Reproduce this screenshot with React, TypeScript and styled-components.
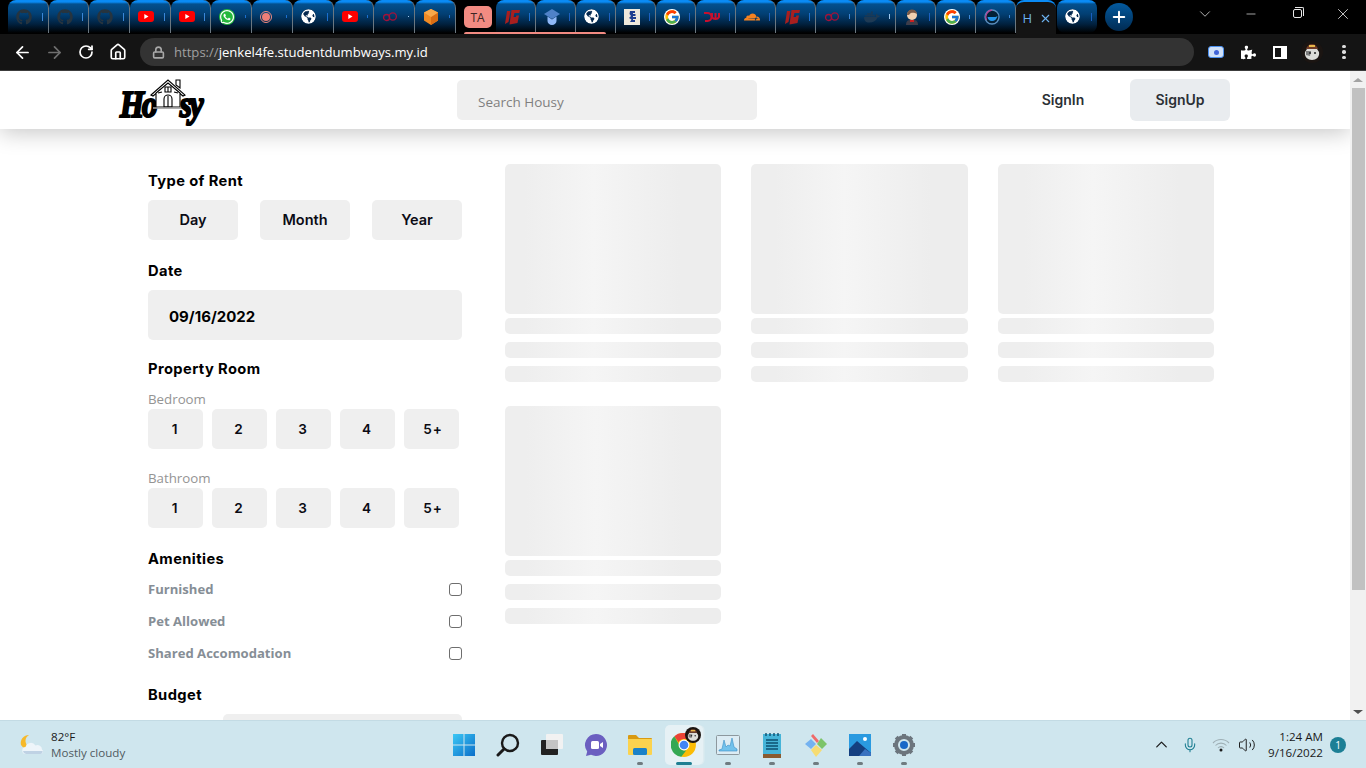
import React from "react";
import styled, { createGlobalStyle } from "styled-components";
import { ArrowLeft, ArrowRight, RotateCw, Home, Lock, ChevronDown, Minus, X, Plus, ChevronUp, Mic, Volume2 } from "lucide-react";
import { FaGithub, FaWhatsapp, FaGlobeAmericas, FaPuzzlePiece, FaDocker } from "react-icons/fa";
import { FcGoogle } from "react-icons/fc";
import { SiCloudflare } from "react-icons/si";

const Global = createGlobalStyle`
  html, body { margin: 0; padding: 0; height: 100%; overflow: hidden; background: #fff; }
  * { box-sizing: border-box; }
`;

const Poppins = `"Inter", "Liberation Sans", sans-serif`;
const Segoe = `"Open Sans", "Liberation Sans", sans-serif`;

const Screen = styled.div`
  width: 1366px; height: 768px; display: flex; flex-direction: column; overflow: hidden;
`;

/* ---------- browser chrome ---------- */
const TabStrip = styled.div`
  height: 34px; background: #000; display: flex; align-items: flex-start; padding-left: 8px; position: relative; flex: none;
`;
const Tab = styled.div<{ $last?: boolean; $w?: number }>`
  width: ${(p) => p.$w ?? 40}px; height: 33px; flex: none; display: flex; align-items: center; padding: 0 0 0 8px; gap: 7px; position: relative;
  background: linear-gradient(180deg, #0a8bf5 0, #0a8bf5 2px, #03508f 4px, #023f73 14px, #01213f 24px, #000 33px);
  border-radius: 8px 8px ${(p) => (p.$last ? "8px 8px" : "0 0")};
  border-right: ${(p) => (p.$last ? "none" : "1px solid #6b7780")};
`;
const ActiveTab = styled.div`
  width: 40px; height: 34px; flex: none; background: #141414; border-radius: 8px 8px 0 0; display: flex; align-items: center;
  padding-left: 7px; gap: 7px; margin-right: 1px; color: #6cb2f0; font: 13px ${Segoe}; border-top: 2px solid #0a8bf5;
`;
const Sliver = styled.span<{ $c?: string; $h?: number }>`
  width: 1px; height: ${(p) => p.$h ?? 8}px; background: ${(p) => p.$c ?? "#1a6fd0"}; flex: none; margin-left: auto; margin-right: 5px;
`;
const GroupChip = styled.div`
  width: 28px; height: 22px; margin: 6px 4px 0 8px; background: #f28b82; border-radius: 5px; color: #3c2624; flex: none;
  display: flex; align-items: center; justify-content: center; font: 12px ${Segoe};
`;
const GroupLine = styled.div`
  position: absolute; left: 464px; top: 32px; width: 142px; height: 2px; background: #f28b82; border-radius: 2px 2px 0 0;
`;
const NewTab = styled.div`
  width: 28px; height: 28px; border-radius: 50%; margin: 3px 0 0 8px; flex: none; color: #fff;
  background: linear-gradient(180deg, #035a9f, #012b52); display: flex; align-items: center; justify-content: center;
`;
const WindowControls = styled.div`
  margin-left: auto; display: flex; color: #e8e8e8; height: 28px;
`;
const WinBtn = styled.div`
  width: 46px; display: flex; align-items: center; justify-content: center; padding-bottom: 1px;
`;
const Restore = styled.span`
  width: 9px; height: 9px; border: 1px solid #e8e8e8; border-radius: 2px; position: relative; display: block;
  &::after { content: ""; position: absolute; left: 1px; top: -3px; width: 8px; height: 8px; border: 1px solid #e8e8e8; border-left: 0; border-bottom: 0; border-radius: 0 2px 0 0; }
`;
const Toolbar = styled.div`
  height: 37px; background: #141414; border-bottom: 1px solid #3c3c3c; display: flex; align-items: center; padding: 0 10px 0 6px; flex: none; color: #fff;
`;
const ToolBtn = styled.div<{ $dim?: boolean }>`
  width: 32px; height: 32px; display: flex; align-items: center; justify-content: center; flex: none;
  color: ${(p) => (p.$dim ? "#6f6f6f" : "#fff")};
`;
const Omnibox = styled.div`
  width: 1054px; height: 28px; margin: 0 6px 0 6px; border-radius: 14px; background: #333; display: flex; align-items: center; padding-left: 12px; gap: 9px; flex: none;
  color: #a8a8a8;
`;
const Url = styled.span`
  font: 13.1px ${Segoe}; color: #a0a0a0;
  & b { font-weight: 400; color: #fff; }
`;
const CastIcon = styled.div`
  width: 16px; height: 12px; background: #cfe0f8; border: 1.5px solid #4a90f0; border-radius: 3px; display: flex; align-items: center; justify-content: center;
  &::after { content: ""; width: 5px; height: 5px; border-radius: 50%; background: #3f63d8; }
`;
const PanelIcon = styled.div`
  width: 14px; height: 13px; border: 2px solid #fff; border-right-width: 6px; background: #141414;
`;
const Dots = styled.div`
  display: flex; flex-direction: column; gap: 2px;
  & span { width: 3.5px; height: 3.5px; border-radius: 50%; background: #ddd; display: block; }
`;

/* ---------- page ---------- */
const Viewport = styled.div`
  flex: 1; display: flex; min-height: 0; background: #fff;
`;
const Page = styled.div`
  width: 1350px; overflow: hidden; display: flex; flex-direction: column;
`;
const Nav = styled.header`
  height: 58px; flex: none; background: #fff; box-shadow: 0 4px 22px rgba(0, 0, 0, 0.22); position: relative; z-index: 1;
  padding: 0 120px; display: flex; align-items: center;
`;
const LogoBox = styled.div`
  width: 337px; display: flex; align-items: center; flex: none;
`;
const LogoText = styled.span`
  display: inline-block; font: italic 700 31px/1 "Liberation Serif", serif; color: #000; -webkit-text-stroke: 1.8px #000; letter-spacing: -2px;
  transform: scaleY(1.22); padding-top: 6px;
`;
const LogoHouse = styled.svg`
  margin: -12px -6px 0 -6px; position: relative; flex: none;
`;
const SearchInput = styled.input`
  width: 300px; height: 40px; border: 0; background: #efefef; border-radius: 5px; padding: 3px 21px 0; font: 500 13.5px ${Segoe}; color: #333; outline: 0;
  &::placeholder { color: #7f7f7f; opacity: 1; }
`;
const Auth = styled.div`
  margin-left: auto; display: flex; gap: 17px; align-items: center;
`;
const AuthBtn = styled.button<{ $filled?: boolean }>`
  width: 100px; height: 42px; border: 0; border-radius: 6px; background: ${(p) => (p.$filled ? "#e9ecef" : "transparent")};
  font: 600 14px ${Poppins}; color: #2b3035; padding: 0 0 2px;
`;
const Main = styled.main`
  display: flex; padding: 35px 136px 0 148px; gap: 43px; align-items: flex-start;
`;
const Sidebar = styled.aside`
  width: 314px; flex: none; margin-top: 7px; display: flex; flex-direction: column;
`;
const Section = styled.section<{ $mt?: number }>`
  margin-top: ${(p) => p.$mt ?? 0}px;
`;
const Heading = styled.h3<{ $mb?: number }>`
  margin: 0 0 ${(p) => p.$mb ?? 9}px; font: 700 14.7px/20px ${Poppins}; color: #000; letter-spacing: 0.4px;
`;
const RentRow = styled.div`
  display: flex; justify-content: space-between;
`;
const RentBtn = styled.button`
  width: 90px; height: 40px; border: 0; border-radius: 5px; background: #efefef; font: 600 14.5px ${Poppins}; color: #0b0b14; padding: 0 0 2px;
`;
const DateInput = styled.input`
  width: 100%; height: 50px; border: 0; border-radius: 5px; background: #efefef; padding: 2px 21px 0; font: 700 15px ${Poppins}; color: #000; outline: 0; display: block;
`;
const SubLabel = styled.div`
  font: 500 13.3px/20px ${Segoe}; color: #949494;
`;
const CountRow = styled.div`
  display: flex; gap: 9px;
`;
const CountBtn = styled.button<{ $wide?: boolean }>`
  width: 55px; height: 40px; border: 0; border-radius: 5px; background: #efefef; font: 600 13.6px ${Poppins}; color: #0b0b14;
  padding: ${(p) => (p.$wide ? "0 0 0 3px" : "0 2px 0 0")};
  letter-spacing: ${(p) => (p.$wide ? "1px" : "0")};
`;
const Amenity = styled.label`
  display: flex; justify-content: space-between; align-items: center; height: 20px; margin-bottom: 12px;
  font: 700 13.1px/20px ${Segoe}; color: #868e96;
`;
const Check = styled.input`
  width: 13px; height: 13px; margin: 0; appearance: none; border: 1px solid #6e6e6e; border-radius: 3px; background: #fff; flex: none;
`;
const BudgetRow = styled.div`
  display: flex; justify-content: flex-end;
`;
const BudgetInput = styled.input`
  width: 239px; height: 40px; border: 0; border-radius: 5px; background: #efefef; outline: 0;
`;
const Results = styled.div`
  width: 709px; flex: none; display: grid; grid-template-columns: repeat(3, 1fr); column-gap: 30px; row-gap: 24px;
`;
const Card = styled.div`
  display: flex; flex-direction: column; gap: 8px;
`;
const Skeleton = styled.div<{ $h: number; $shine: number; $mb?: number }>`
  height: ${(p) => p.$h}px; margin-bottom: ${(p) => p.$mb ?? 0}px; border-radius: 5px;
  background: linear-gradient(90deg, #eee 0%, #eee ${(p) => p.$shine - 32}%, #f5f5f5 ${(p) => p.$shine}%, #ededed ${(p) => p.$shine + 40}%, #ededed 100%);
`;

/* ---------- scrollbar ---------- */
const Scrollbar = styled.div`
  width: 16px; background: #f1f1f1; display: flex; flex-direction: column; align-items: center; flex: none;
`;
const ScrollUp = styled.div`
  width: 0; height: 0; margin-top: 7px; border: 5px solid transparent; border-top: 0; border-bottom: 4px solid #a3a3a3;
`;
const ScrollThumb = styled.div`
  width: 13px; height: 502px; margin-top: 6px; background: #c1c1c1; flex: none;
`;
const ScrollDown = styled.div`
  width: 0; height: 0; margin-top: auto; margin-bottom: 6px; border: 5px solid transparent; border-bottom: 0; border-top: 4px solid #505050;
`;

/* ---------- taskbar ---------- */
const Taskbar = styled.footer`
  height: 48px; flex: none; background: #cfe6ee; border-top: 1px solid #c3dbe4; display: grid; grid-template-columns: 1fr auto 1fr; align-items: center;
`;
const Weather = styled.div`
  display: flex; align-items: center; padding-left: 19px; gap: 8px;
`;
const WeatherText = styled.div`
  font: 11.6px/16px ${Segoe}; color: #1a1a1a;
  & small { display: block; font-size: 11.6px; color: #4f5a60; }
`;
const TaskIcons = styled.div`
  display: flex; margin-left: 1px;
`;
const TaskIcon = styled.div<{ $active?: boolean }>`
  width: 44px; height: 44px; display: flex; align-items: center; justify-content: center; position: relative; flex: none;
  &::before {
    content: ""; position: absolute; left: 3px; top: 2px; width: 38px; height: 40px; border-radius: 5px;
    background: ${(p) => (p.$active ? "#e6f1f5" : "transparent")};
    box-shadow: ${(p) => (p.$active ? "2px 0 0 -0.5px #dcebf0" : "none")};
  }
  & > svg { position: relative; }
  &::after {
    content: ""; position: absolute; bottom: 2px; left: 50%; transform: translateX(-50%);
    width: ${(p) => (p.$active ? "16px" : "6px")}; height: 3px; border-radius: 2px; background: ${(p) => (p.$active ? "#1d7f92" : "#6f7b80")};
  }
`;
const NoDot = styled(TaskIcon)`
  &::after { display: none; }
`;
const Tray = styled.div`
  display: flex; align-items: center; justify-content: flex-end; padding-right: 20px; color: #1b1b1b;
`;
const TrayBtn = styled.div<{ $w: number; $c?: string }>`
  width: ${(p) => p.$w}px; display: flex; justify-content: center; color: ${(p) => p.$c ?? "#1b1b1b"};
`;
const Clock = styled.div`
  font: 11.6px/16px ${Segoe}; text-align: right; color: #1a1a1a; margin: 0 7px 0 6px; width: 60px;
`;
const Badge = styled.div`
  width: 16px; height: 16px; border-radius: 50%; background: #1c7f95; color: #fff; font: 10px/16px ${Segoe}; text-align: center;
`;
const AvatarBadge = styled.span`
  position: absolute; right: 5px; top: 4px; z-index: 1; display: block; line-height: 0;
`;

/* ---------- drawings ---------- */
const Yt = () => (
  <svg width="16" height="11" viewBox="0 0 16 11"><rect width="16" height="11" rx="3" fill="#f00" /><path d="M6.3 3l4.2 2.5L6.3 8z" fill="#fff" /></svg>
);
const Inf = () => (
  <svg width="16" height="16" viewBox="0 0 16 16" fill="none" stroke="#a3123a" strokeWidth="1.3"><circle cx="4.6" cy="8.5" r="3" /><circle cx="10.8" cy="7.5" r="3.6" /></svg>
);
const Box3d = () => (
  <svg width="16" height="16" viewBox="0 0 16 16"><path d="M8 0l7 3.6v8L8 16l-7-4.400v-8z" fill="#f08a24" /><path d="M8 8l7-4.400v8L8 16z" fill="#d96d14" /><path d="M8 0l7 3.600L8 8 1 3.600z" fill="#f9a84a" /></svg>
);
const Rec = () => (
  <svg width="12" height="12" viewBox="0 0 12 12"><circle cx="6" cy="6" r="5.500" fill="none" stroke="#f28b82" /><circle cx="6" cy="6" r="4" fill="#ee7f78" /></svg>
);
const IG = () => (
  <svg width="16" height="16" viewBox="0 0 16 16"><path d="M3 2h3.500L4.500 13 1 15z" fill="#a81f1f" /><path d="M7.500 1H16l-.7 3H10.500L9.500 8H12l.3-1.500H15L13.500 14l-8 1.500z" fill="#a81f1f" /></svg>
);
const Cap = () => (
  <svg width="16" height="16" viewBox="0 0 16 16"><path d="M8 0l8 5-8 5-8-5z" fill="#4f82c8" /><path d="M3.500 7.500L8 10.400l4.500-2.900V12a4.500 4 0 0 1-9 0z" fill="#8fb8f8" /></svg>
);
const Doc = () => (
  <svg width="16" height="16" viewBox="0 0 16 16"><rect width="16" height="16" fill="#eee9dc" /><path d="M6 2h5v2H9v1h2.500v2H9v1h3v2H9v1h2v2H6l1.500-2.500L5 9l2-2-1.500-2z" fill="#1f3f8f" /></svg>
);
const Dw = () => (
  <svg width="16" height="10" viewBox="0 0 16 10" fill="none" stroke="#c8102e" strokeWidth="2"><path d="M0 1h3.500a4 4 0 0 1 0 8H1" /><path d="M8 1v4a4 4 0 0 0 7 0V1M11.500 1v6" /></svg>
);
const Jenkins = ({ size }: { size: number }) => (
  <svg width={size} height={size} viewBox="0 0 16 16"><path d="M2 16c0-4 2-5 4-5h4c2 0 4 1 4 5z" fill="#3d3d4a" /><circle cx="8" cy="6" r="5" fill="#f0d0b0" /><path d="M3 6a5 5 0 0 1 10-1c-2-1-6-2-7 0-1 1-2 1-3 1z" fill="#7a5a48" /><rect x="6" y="11" width="4" height="2" fill="#c22" /></svg>
);
const DockerRing = () => (
  <svg width="16" height="16" viewBox="0 0 16 16"><circle cx="8" cy="8" r="7" fill="#032036" stroke="#5b8fc0" strokeWidth="1.300" /><path d="M2.500 11A7 7 0 0 1 8 1" fill="none" stroke="#b0489a" strokeWidth="1.300" /><path d="M3.500 8h8c1 0 1.500-1 2-1-.5 3-3 5-5.500 5s-4-1.500-4.500-4z" fill="#2496ed" /></svg>
);
const Fav = ({ k }: { k: string }) => {
  switch (k) {
    case "gh": return <FaGithub size={16} color="#26343f" />;
    case "yt": return <Yt />;
    case "wa": return <FaWhatsapp size={16} color="#fff" style={{ background: "#25b83c", borderRadius: "50%" }} />;
    case "rec": return <Rec />;
    case "globe": return <FaGlobeAmericas size={15} color="#fff" style={{ background: "#04284f", borderRadius: "50%" }} />;
    case "inf": return <Inf />;
    case "box": return <Box3d />;
    case "ig": return <IG />;
    case "cap": return <Cap />;
    case "doc": return <Doc />;
    case "g": return <FcGoogle size={16} style={{ background: "#fff", borderRadius: "50%" }} />;
    case "dw": return <Dw />;
    case "cf": return <SiCloudflare size={16} color="#f58220" />;
    case "dk": return <FaDocker size={16} color="#1e3a54" />;
    case "jk": return <Jenkins size={16} />;
    case "dr": return <DockerRing />;
    default: return null;
  }
};
const Avatar = ({ size }: { size: number }) => (
  <svg width={size} height={size} viewBox="0 0 22 22"><circle cx="11" cy="11" r="11" fill="#1b1512" /><path d="M4 11l2-3h10l2 3c1 5-3 8-7 8s-8-3-7-8z" fill="#dcdcd8" /><path d="M5 8c1-3 3-5 6-5s5 2 6 5z" fill="#6e3a26" /><rect x="8" y="4" width="6" height="2" fill="#e8b84a" /><path d="M5 10l5 0-1 5-4-1z" fill="#7c7c7c" /><circle cx="14" cy="12" r="1" fill="#222" /><circle cx="9" cy="12" r="1" fill="#222" /></svg>
);
const Cloud = () => (
  <svg width="24" height="22" viewBox="0 0 24 22"><path d="M10 1a8 8 0 0 0-8 10 8 8 0 0 0 11 3 7 7 0 0 1-3-13z" fill="#f6b92b" /><path d="M7 20a3.500 3.500 0 0 1-.5-7 5.500 5.500 0 0 1 10-1.500A4.500 4.500 0 0 1 23 15.500 2.500 2.500 0 0 1 21.500 20z" fill="#eef5fa" /><path d="M4 17h19.500a2.500 2.500 0 0 1-2 3H7a3.500 3.500 0 0 1-3-3z" fill="#bfd2e4" /></svg>
);
const Win = () => (
  <svg width="24" height="24" viewBox="0 0 24 24"><defs><linearGradient id="w1" x1="0" y1="0" x2="1" y2="1"><stop offset="0" stopColor="#3cc8f5" /><stop offset="1" stopColor="#0b6ec9" /></linearGradient></defs><path d="M1 1h10.500v10.500H1zM12.500 1H23v10.500H12.500zM1 12.500h10.500V23H1zM12.500 12.500H23V23H12.500z" fill="url(#w1)" /></svg>
);
const SearchGlass = () => (
  <svg width="24" height="24" viewBox="0 0 24 24" fill="none" stroke="#1a1a1a"><circle cx="14" cy="10" r="8" strokeWidth="2.400" /><path d="M8 16l-6 6" strokeWidth="3" strokeLinecap="round" /></svg>
);
const TaskView = () => (
  <svg width="24" height="24" viewBox="0 0 24 24"><rect x="6" y="1" width="17" height="15" rx="1" fill="#f2f2f2" /><rect x="1" y="7" width="17" height="15" rx="1" fill="#222" /><rect x="6" y="7" width="12" height="9" fill="#c4c4c4" /></svg>
);
const Meet = () => (
  <svg width="24" height="24" viewBox="0 0 24 24"><path d="M12 1a11 11 0 1 1-5 20.800L2 23l1.200-4.500A11 11 0 0 1 12 1z" fill="#6b5fc0" /><rect x="7" y="8" width="8" height="8" rx="1.500" fill="#fff" /><path d="M16 11l3-2v6l-3-2z" fill="#fff" /></svg>
);
const Folder = () => (
  <svg width="26" height="24" viewBox="0 0 26 24"><path d="M1 3a1 1 0 0 1 1-1h7l3 3h12a1 1 0 0 1 1 1v5H1z" fill="#d99a12" /><path d="M1 6h24v15a1 1 0 0 1-1 1H2a1 1 0 0 1-1-1z" fill="#fbd34e" /><rect x="6" y="15" width="14" height="7" rx="1.500" fill="#1a82c8" /></svg>
);
const Chrome = () => (
  <svg width="26" height="26" viewBox="0 0 48 48"><circle cx="24" cy="24" r="22" fill="#fbbc05" /><path d="M24 2a22 22 0 0 1 19 11H24a11 11 0 0 0-10 6L6 8A22 22 0 0 1 24 2z" fill="#ea4335" /><path d="M6 8l9.500 16.500A10 10 0 0 0 28 34L19 45.500A22 22 0 0 1 6 8z" fill="#34a853" /><circle cx="24" cy="24" r="10" fill="#fff" /><circle cx="24" cy="24" r="8" fill="#4285f4" /></svg>
);
const Monitor = () => (
  <svg width="24" height="20" viewBox="0 0 24 20"><rect x="0.500" y="0.500" width="23" height="19" rx="1" fill="#dcecf4" stroke="#8d989e" /><path d="M3 15l3-1 2-9 2 7 2-2 2 1 2-8 2 9 3 2v2H3z" fill="#72c2ec" stroke="#3a8fc6" strokeWidth=".6" /></svg>
);
const Notes = () => (
  <svg width="20" height="26" viewBox="0 0 20 26"><rect x="1" y="2" width="18" height="22" fill="#46b4d8" /><path d="M1 22h18v4H1z" fill="#8a5a2f" /><path d="M4 8h12M4 11h12M4 14h12M4 17h12" stroke="#0d4f70" strokeWidth="1.400" /><path d="M4 1v3M8 1v3M12 1v3M16 1v3" stroke="#0d4f70" strokeWidth="1.400" /></svg>
);
const Kite = () => (
  <svg width="24" height="24" viewBox="0 0 24 24"><path d="M7 6l5 5-5 5-6-5z" fill="#74b2f0" /><path d="M17 5l6 6-5 5-5-5z" fill="#7cc46a" /><path d="M12 12l6 5-6 7-5-7z" fill="#f6dc72" /><path d="M9 1l6 7-2 2-6-7z" fill="#ef6a6a" /></svg>
);
const Photo = () => (
  <svg width="22" height="22" viewBox="0 0 22 22"><rect width="22" height="22" fill="#2a9ae0" /><path d="M0 22v-7l8-8 14 12v3z" fill="#143f80" /><path d="M10 22l6-7 6 4v3z" fill="#3a72c0" /><circle cx="16" cy="5" r="2" fill="#fff" /></svg>
);
const Gear = () => (
  <svg width="24" height="24" viewBox="0 0 24 24"><circle cx="12" cy="12" r="8" fill="none" stroke="#6c757d" strokeWidth="4" /><path d="M12 1v4M12 19v4M1 12h4M19 12h4M4.200 4.200L7 7M17 17l2.800 2.800M4.200 19.800L7 17M17 7l2.800-2.800" stroke="#6c757d" strokeWidth="4" /><circle cx="12" cy="12" r="4" fill="#1868c8" /></svg>
);
const WifiFaded = () => (
  <svg width="18" height="14" viewBox="0 0 18 14" fill="none" stroke="#9fb0b6" strokeWidth="1.100"><path d="M1 5a11 11 0 0 1 16 0M3.500 7.500a7.500 7.500 0 0 1 11 0M6 10a4 4 0 0 1 6 0" /><circle cx="9" cy="12" r="1.500" fill="#1b1b1b" stroke="none" /></svg>
);

const group1: [string, string?, number?][] = [
  ["gh", "#3a87d8"], ["gh", "#3a87d8"], ["gh", "#3a87d8"], ["yt", "#3a87d8"], ["yt", "#3a87d8"],
  ["wa", "#1a6fd0", 3], ["rec", "#1a6fd0", 3], ["globe", "#1a6fd0"], ["yt", "#1a6fd0", 3], ["inf", "#9ec8ee", 1], ["box", "#1a6fd0", 3],
];
const group2: [string, string?, number?][] = [
  ["ig", "#1a6fd0"], ["cap", "#1a5fc0"], ["globe", "#1a5fc0"], ["doc", "#1a5fc0"], ["g", "#1a5fc0"], ["dw", "#1a5fc0"],
  ["cf", "#1a5fc0"], ["ig", "#1a6fd0"], ["inf", "#3a87d8", 5], ["dk", "#9ec8ee", 5], ["jk", "#1a5fc0"], ["g", "#3a87d8", 4], ["dr", "#3a87d8", 3],
];
const counts = ["1", "2", "3", "4", "5+"];
const shines = [41, 43, 44, 42];

const Counters = () => (
  <CountRow>{counts.map((c) => <CountBtn key={c} $wide={c === "5+"}>{c}</CountBtn>)}</CountRow>
);

export default function App() {
  return (
    <Screen>
      <Global />
      <TabStrip>
        {group1.map(([k, c, h], i) => (
          <Tab key={i} $w={40.7}><Fav k={k} /><Sliver $c={c} $h={h} /></Tab>
        ))}
        <GroupChip>TA</GroupChip>
        {group2.map(([k, c, h], i) => (
          <Tab key={i}><Fav k={k} /><Sliver $c={c} $h={h} /></Tab>
        ))}
        <ActiveTab>H<X size={13} strokeWidth={2} /></ActiveTab>
        <Tab $last><Fav k="globe" /><Sliver $c="#1a5fc0" /></Tab>
        <NewTab><Plus size={18} strokeWidth={2.6} /></NewTab>
        <GroupLine />
        <WindowControls>
          <WinBtn><ChevronDown size={18} strokeWidth={1} /></WinBtn>
          <WinBtn><Minus size={14} strokeWidth={1.2} /></WinBtn>
          <WinBtn><Restore /></WinBtn>
          <WinBtn><X size={18} strokeWidth={1.1} /></WinBtn>
        </WindowControls>
      </TabStrip>
      <Toolbar>
        <ToolBtn><ArrowLeft size={19} strokeWidth={2.2} /></ToolBtn>
        <ToolBtn $dim><ArrowRight size={19} strokeWidth={2.2} /></ToolBtn>
        <ToolBtn><RotateCw size={16} strokeWidth={2.6} /></ToolBtn>
        <ToolBtn><Home size={18} strokeWidth={2.2} /></ToolBtn>
        <Omnibox>
          <Lock size={13} strokeWidth={3} />
          <Url>https://<b>jenkel4fe.studentdumbways.my.id</b></Url>
        </Omnibox>
        <ToolBtn><CastIcon /></ToolBtn>
        <ToolBtn><FaPuzzlePiece size={15} /></ToolBtn>
        <ToolBtn><PanelIcon /></ToolBtn>
        <ToolBtn><Avatar size={22} /></ToolBtn>
        <ToolBtn><Dots><span /><span /><span /></Dots></ToolBtn>
      </Toolbar>

      <Viewport>
        <Page>
          <Nav>
            <LogoBox>
              <LogoText>Ho</LogoText>
              <LogoHouse width="36" height="32" viewBox="0 0 36 32" fill="#fff" stroke="#000" strokeWidth="1.100">
                <path d="M26 2h4v8l-4-3z" />
                <path d="M1 17L18 2l17 15-2 1L18 6 3 18z" />
                <path d="M6 15v14h24V15L18 5z" />
                <path d="M14 29v-8a4 4 0 0 1 8 0v8zM18 18v11M15 9h6v5h-6zM18 9v5M8 15l4-1M24 14l4 1" fill="none" />
                <path d="M3 30h30" stroke="#999" strokeWidth="1.600" />
              </LogoHouse>
              <LogoText>sy</LogoText>
            </LogoBox>
            <SearchInput placeholder="Search Housy" />
            <Auth>
              <AuthBtn>SignIn</AuthBtn>
              <AuthBtn $filled>SignUp</AuthBtn>
            </Auth>
          </Nav>
          <Main>
            <Sidebar>
              <Section>
                <Heading>Type of Rent</Heading>
                <RentRow>
                  <RentBtn>Day</RentBtn>
                  <RentBtn>Month</RentBtn>
                  <RentBtn>Year</RentBtn>
                </RentRow>
              </Section>
              <Section $mt={21}>
                <Heading>Date</Heading>
                <DateInput readOnly value="09/16/2022" />
              </Section>
              <Section $mt={19}>
                <Heading $mb={10}>Property Room</Heading>
                <SubLabel>Bedroom</SubLabel>
                <Counters />
              </Section>
              <Section $mt={19}>
                <SubLabel>Bathroom</SubLabel>
                <Counters />
              </Section>
              <Section $mt={21}>
                <Heading $mb={10}>Amenities</Heading>
                <Amenity>Furnished<Check type="checkbox" /></Amenity>
                <Amenity>Pet Allowed<Check type="checkbox" /></Amenity>
                <Amenity>Shared Accomodation<Check type="checkbox" /></Amenity>
              </Section>
              <Section $mt={10}>
                <Heading>Budget</Heading>
                <BudgetRow><BudgetInput /></BudgetRow>
              </Section>
            </Sidebar>
            <Results>
              {shines.map((s) => (
                <Card key={s}>
                  <Skeleton $h={150} $shine={s} $mb={-4} />
                  <Skeleton $h={16} $shine={s} />
                  <Skeleton $h={16} $shine={s} />
                  <Skeleton $h={16} $shine={s} />
                </Card>
              ))}
            </Results>
          </Main>
        </Page>
        <Scrollbar>
          <ScrollUp />
          <ScrollThumb />
          <ScrollDown />
        </Scrollbar>
      </Viewport>

      <Taskbar>
        <Weather>
          <Cloud />
          <WeatherText>82°F<small>Mostly cloudy</small></WeatherText>
        </Weather>
        <TaskIcons>
          <NoDot><Win /></NoDot>
          <NoDot><SearchGlass /></NoDot>
          <NoDot><TaskView /></NoDot>
          <NoDot><Meet /></NoDot>
          <TaskIcon><Folder /></TaskIcon>
          <TaskIcon $active><Chrome /><AvatarBadge><Avatar size={16} /></AvatarBadge></TaskIcon>
          <TaskIcon><Monitor /></TaskIcon>
          <TaskIcon><Notes /></TaskIcon>
          <TaskIcon><Kite /></TaskIcon>
          <TaskIcon><Photo /></TaskIcon>
          <TaskIcon><Gear /></TaskIcon>
        </TaskIcons>
        <Tray>
          <TrayBtn $w={28}><ChevronUp size={19} strokeWidth={1.6} /></TrayBtn>
          <TrayBtn $w={30} $c="#1d7f92"><Mic size={16} strokeWidth={1.6} /></TrayBtn>
          <TrayBtn $w={32}><WifiFaded /></TrayBtn>
          <TrayBtn $w={20}><Volume2 size={18} strokeWidth={1.3} /></TrayBtn>
          <Clock>1:24 AM<br />9/16/2022</Clock>
          <Badge>1</Badge>
        </Tray>
      </Taskbar>
    </Screen>
  );
}
